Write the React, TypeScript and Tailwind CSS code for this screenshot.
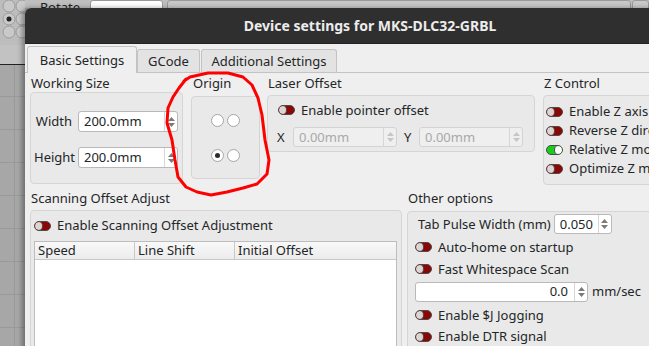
import type { ReactNode } from 'react'

function Toggle({ on = false }: { on?: boolean }) {
  return (
    <span
      className={
        on
          ? 'flex h-[10px] w-[17px] shrink-0 justify-end overflow-hidden rounded-full border border-[#4b4b4b] bg-[#1bcc1b]'
          : 'flex h-[10px] w-[17px] shrink-0 justify-start overflow-hidden rounded-full border border-[#4b4b4b] bg-[#8c0606]'
      }
    >
      <span
        className={
          on
            ? 'h-full w-[8px] rounded-full border-l border-[#4b4b4b] bg-white'
            : 'h-full w-[8px] rounded-full border-r border-[#4b4b4b] bg-[#ddd4d4]'
        }
      />
    </span>
  )
}

function Check({ label, on }: { label: string; on?: boolean }) {
  return (
    <div className="flex items-center gap-[6px] whitespace-nowrap">
      <Toggle on={on} />
      <span>{label}</span>
    </div>
  )
}

function Arrows({ disabled }: { disabled?: boolean }) {
  const c = disabled ? '#c6c6c6' : '#7a7a7a'
  return (
    <div className="flex w-[13px] shrink-0 flex-col items-center justify-center gap-[2px] border-l border-[#d6d6d6]">
      <svg width="7" height="4" viewBox="0 0 7 4">
        <path d="M0 4 3.5 0 7 4Z" fill={c} />
      </svg>
      <svg width="7" height="4" viewBox="0 0 7 4">
        <path d="M0 0 3.5 4 7 0Z" fill={c} />
      </svg>
    </div>
  )
}

function Spin({
  value,
  className,
  disabled,
  right,
}: {
  value: string
  className: string
  disabled?: boolean
  right?: boolean
}) {
  return (
    <div
      className={`flex shrink-0 rounded-[3px] border ${
        disabled ? 'border-[#d3d3d3] bg-[#efefef] text-[#a9a9a9]' : 'border-[#b9b9b9] bg-white text-[#232627]'
      } ${className}`}
    >
      <div className={right ? 'flex flex-1 items-center justify-end pr-[6px]' : 'flex flex-1 items-center pl-[5px]'}>
        {value}
      </div>
      <Arrows disabled={disabled} />
    </div>
  )
}

function Radio({ checked }: { checked?: boolean }) {
  return (
    <span className="flex h-[13px] w-[13px] items-center justify-center rounded-full border border-[#a6a6a6] bg-white">
      {checked && <span className="h-[5px] w-[5px] rounded-full bg-[#2b2b2b]" />}
    </span>
  )
}

function Box({ className, children }: { className: string; children?: ReactNode }) {
  return <div className={`rounded-[4px] border border-[#d5d5d5] bg-[#e9e9e9] ${className}`}>{children}</div>
}

function Backdrop() {
  return (
    <div className="flex h-full w-full">
      <div className="flex w-[25px] shrink-0 flex-col">
        <svg width="25" height="45" className="bg-[#bdbdbd]">
          {[6, 19, 32].map((y) => (
            <g key={y}>
              <circle cx="9" cy={y} r="6" fill="#c9c9c9" stroke="#9c9c9c" />
              <circle cx="22" cy={y} r="6" fill="#c9c9c9" stroke="#9c9c9c" />
            </g>
          ))}
          <circle cx="9" cy="19" r="2.5" fill="#222" />
        </svg>
        <div className="h-[20px] border-b border-[#222] bg-[#c2c2c2]" />
        <svg width="25" height="281" className="bg-[#a7a7a7]">
          <line x1="14.5" y1="0" x2="14.5" y2="281" stroke="#999" />
          {[31, 64, 97, 130, 163, 196, 229, 262].map((y) => (
            <line key={y} x1="0" y1={y + 0.5} x2="25" y2={y + 0.5} stroke="#999" />
          ))}
        </svg>
      </div>
      <div className="flex h-[8px] flex-1 items-end bg-[#bfbfbf] text-[13px] text-[#222]">
        <span className="ml-[15px] leading-[17px] translate-y-[8px]">Rotate</span>
        <div className="ml-[10px] h-[14px] w-[73px] translate-y-[6px] rounded-[3px] border border-[#999] bg-white" />
        <div className="ml-[4px] h-[14px] w-[464px] translate-y-[6px] rounded-[3px] border border-[#9a9a9a] bg-[#c8c8c8]" />
        <div className="ml-[1px] h-[14px] flex-1 translate-y-[6px] rounded-[3px] border border-[#9a9a9a] bg-[#cacaca]" />
      </div>
    </div>
  )
}

function Annotation() {
  const pts =
    '184,81 190,77 208,73 228,73 243,77 252,85 258,98 262,115 265,140 269,160 267,174 257,184 243,188 227,192 211,195 197,192 186,187 178,177 175,160 172,140 167,123 168,108 173,97 179,88 186,79'
  return (
    <svg className="pointer-events-none absolute left-0 top-0" width="649" height="346">
      <polyline points={pts} fill="none" stroke="#ff0000" strokeWidth="3" strokeLinejoin="round" strokeLinecap="round" />
    </svg>
  )
}

export default function App() {
  return (
    <div className="relative h-[346px] w-[649px] overflow-hidden bg-[#a7a7a7] font-['Noto_Sans',sans-serif]">
      <Backdrop />

      {/* dialog window */}
      <div className="absolute left-[25px] top-[8px] flex h-[360px] w-[690px] flex-col overflow-hidden rounded-t-[6px] bg-[#efefef] shadow-[-3px_0_5px_rgba(0,0,0,0.35)]">
        <div className="flex h-[36px] shrink-0 items-center justify-center border-b border-[#222] bg-[#2f2f2f] text-[14px] font-bold text-[#ececec]">
          Device settings for MKS-DLC32-GRBL
        </div>

        {/* tabs */}
        <div className="ml-[2px] mt-[2px] flex h-[26px] items-end text-[13px] leading-[17px] text-[#232627]">
          <div className="relative z-10 -mb-px flex h-[27px] w-[110px] items-center justify-center rounded-t-[3px] border border-b-0 border-[#c3c3c3] bg-[#efefef]">
            Basic Settings
          </div>
          <div className="flex h-[23px] w-[63px] items-center justify-center rounded-t-[3px] border border-b-0 border-[#c3c3c3] bg-[#e3e3e3]">
            GCode
          </div>
          <div className="ml-px flex h-[23px] w-[136px] items-center justify-center rounded-t-[3px] border border-b-0 border-[#c3c3c3] bg-[#e3e3e3]">
            Additional Settings
          </div>
        </div>

        {/* tab page */}
        <div className="flex-1 border-t border-[#c3c3c3] pl-[5px] pt-[2px] text-[13px] leading-[17px] text-[#232627]">
          <div className="flex items-start">
            <div className="w-[153px] shrink-0">
              <div className="h-[17px] pl-[1px]">Working Size</div>
              <Box className="grid h-[92px] grid-cols-[38px_100px] content-start items-center gap-x-[6px] gap-y-[15px] pl-[3px] pt-[18px]">
                <span className="text-right">Width</span>
                <Spin className="h-[21px] w-[100px]" value="200.0mm" />
                <span className="text-right">Height</span>
                <Spin className="h-[21px] w-[100px]" value="200.0mm" />
              </Box>
            </div>

            <div className="ml-[8px] w-[69px] shrink-0">
              <div className="h-[21px] pl-[2px]">Origin</div>
              <Box className="flex h-[83px] flex-col items-center gap-[22px] pt-[17px]">
                <div className="flex gap-[3px]">
                  <Radio />
                  <Radio />
                </div>
                <div className="flex gap-[3px]">
                  <Radio checked />
                  <Radio />
                </div>
              </Box>
            </div>

            <div className="ml-[7px] w-[268px] shrink-0">
              <div className="h-[20px] pl-[1px]">Laser Offset</div>
              <Box className="flex h-[57px] flex-col pt-[5px]">
                <div className="flex h-[18px] items-center pl-[10px]">
                  <Check label="Enable pointer offset" />
                </div>
                <div className="mt-[8px] flex items-center pl-[9px]">
                  <span className="w-[8px]">X</span>
                  <Spin disabled className="ml-[8px] h-[20px] w-[104px]" value="0.00mm" />
                  <span className="ml-[7px] w-[8px]">Y</span>
                  <Spin disabled className="ml-[7px] h-[20px] w-[104px]" value="0.00mm" />
                </div>
              </Box>
            </div>

            <div className="ml-[8px] w-[130px] shrink-0">
              <div className="h-[20px] pl-[1px]">Z Control</div>
              <Box className="flex h-[90px] flex-col pl-[2px] pt-[6px]">
                <div className="flex h-[19px] items-center">
                  <Check label="Enable Z axis" />
                </div>
                <div className="flex h-[19px] items-center">
                  <Check label="Reverse Z direction" />
                </div>
                <div className="flex h-[19px] items-center">
                  <Check label="Relative Z moves" on />
                </div>
                <div className="flex h-[19px] items-center">
                  <Check label="Optimize Z moves" />
                </div>
              </Box>
            </div>
          </div>

          <div className="mt-[5px] flex items-start">
            <div className="w-[372px] shrink-0">
              <div className="h-[20px] pl-[1px]">Scanning Offset Adjust</div>
              <Box className="flex h-[160px] flex-col pt-[6px]">
                <div className="flex h-[18px] items-center pl-[3px]">
                  <Check label="Enable Scanning Offset Adjustment" />
                </div>
                <div className="ml-[3px] mt-[6px] h-[130px] w-[363px] border border-[#bdbdbd] bg-white">
                  <div className="flex h-[18px] border-b border-[#c8c8c8] bg-[linear-gradient(#f8f8f8,#ececec)]">
                    <div className="w-[100px] border-r border-[#c8c8c8] pl-[3px]">Speed</div>
                    <div className="w-[100px] border-r border-[#c8c8c8] pl-[3px]">Line Shift</div>
                    <div className="flex-1 pl-[3px]">Initial Offset</div>
                  </div>
                </div>
              </Box>
            </div>

            <div className="ml-[5px] w-[270px] shrink-0">
              <div className="h-[21px] pl-[1px]">Other options</div>
              <Box className="flex h-[160px] flex-col">
                <div className="flex h-[24px] items-center gap-[3px] pl-[10px]">
                  <span>Tab Pulse Width (mm)</span>
                  <Spin className="h-[20px] w-[58px]" value="0.050" />
                </div>
                <div className="flex h-[22px] items-center pl-[7px]">
                  <Check label="Auto-home on startup" />
                </div>
                <div className="flex h-[22px] items-center pl-[7px]">
                  <Check label="Fast Whitespace Scan" />
                </div>
                <div className="flex h-[23px] items-center gap-[4px] pl-[7px]">
                  <Spin right className="h-[20px] w-[173px]" value="0.0" />
                  <span>mm/sec</span>
                </div>
                <div className="flex h-[24px] items-center pl-[7px]">
                  <Check label="Enable $J Jogging" />
                </div>
                <div className="flex h-[19px] items-center pl-[7px]">
                  <Check label="Enable DTR signal" />
                </div>
              </Box>
            </div>
          </div>
        </div>
      </div>

      <Annotation />
    </div>
  )
}
